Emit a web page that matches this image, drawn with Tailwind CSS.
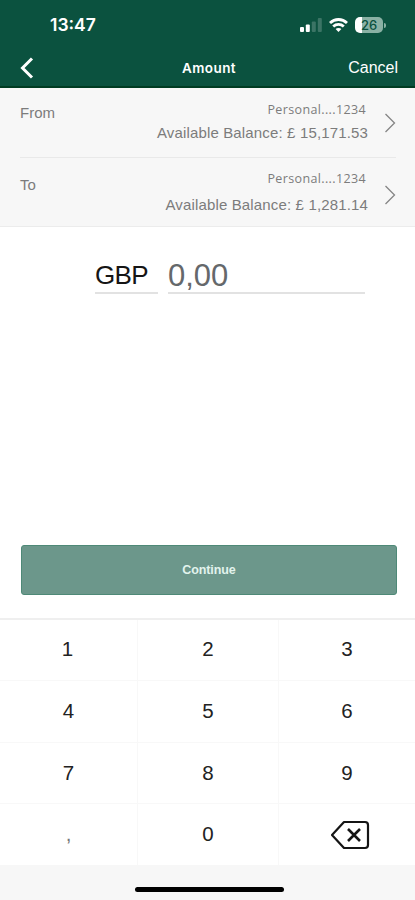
<!DOCTYPE html>
<html lang="en">
<head>
    <meta charset="UTF-8">
    <meta name="viewport" content="width=device-width, initial-scale=1.0">
    <title>Amount</title>
    <script src="https://cdn.jsdelivr.net/npm/@tailwindcss/browser@4"></script>
</head>
<body class="bg-white font-['Liberation_Sans',sans-serif]">
    <div class="w-full h-[900px] flex flex-col overflow-hidden">
        <!-- Header -->
        <header class="h-[88px] shrink-0 bg-[#0b523f] border-b-2 border-[#003c22] text-white">
            <div class="h-[50px] pl-[50px] pr-[29px] flex justify-between items-center">
                <span class="font-['Inter',sans-serif] font-semibold text-[17.5px] leading-[50px]">13:47</span>
                <div class="flex items-center">
                    <svg class="w-[22px] h-[14px] mr-[7px]" viewBox="0 0 22 14" fill="white">
                        <rect x="0" y="9" width="4" height="5" rx="1"/>
                        <rect x="5.8" y="6.5" width="4" height="7.5" rx="1"/>
                        <rect x="11.8" y="3.5" width="4" height="10.5" rx="1" fill-opacity=".2"/>
                        <rect x="17.8" y="0" width="4" height="14" rx="1" fill-opacity=".2"/>
                    </svg>
                    <svg class="w-[19px] h-[14px] mr-[7px]" viewBox="0 0 19 14" fill="none" stroke="white" stroke-width="2.8">
                        <path d="M1 5C5.8 .3 13.2 .3 18 5"/>
                        <path d="M4.2 8.4C7.2 5.6 11.8 5.6 14.8 8.4"/>
                        <path d="M6.6 11L9.5 14L12.4 11C10.8 9.5 8.2 9.5 6.6 11Z" fill="white" stroke="none"/>
                    </svg>
                    <div class="w-[28px] h-[16px] rounded-[5px] bg-linear-to-r from-white from-26% to-[#8ab1a4] to-26% flex items-center justify-center text-[#0b523f] text-[13px] leading-4 font-['Inter',sans-serif] font-medium">26</div>
                    <div class="w-[2px] h-[5px] rounded-r-full bg-[#8ab1a4] ml-px"></div>
                </div>
            </div>
            <div class="h-[36px] pl-[20px] pr-[17px] grid grid-cols-3 items-center">
                <svg class="w-[14px] h-[22px]" viewBox="0 0 14 22" fill="none" stroke="white" stroke-width="3">
                    <path d="M12 1.5L2.5 11L12 20.5"/>
                </svg>
                <h1 class="text-center font-['Inter',sans-serif] font-semibold text-[13.5px] leading-9 tracking-[0.45px]">Amount</h1>
                <button class="text-right text-[16px]">Cancel</button>
            </div>
        </header>

        <!-- Accounts -->
        <section class="h-[139px] shrink-0 bg-[#f7f7f7] border-b border-[#ececec] pl-[20px] pr-[19px] text-[#7c7c7c] text-[15px]">
            <div class="h-[70px] flex border-b border-[#e9e9e9]">
                <span class="pt-[16px] leading-[18px]">From</span>
                <div class="flex-1 pt-[13px] text-right">
                    <p class="pr-[2px] text-[12.5px] leading-[18px] tracking-[0.37px] font-['Open_Sans',sans-serif]">Personal....1234</p>
                    <p class="pt-[5px] leading-[18px] tracking-[0.15px] whitespace-nowrap">Available Balance: £ 15,171.53</p>
                </div>
                <svg class="w-[12px] h-[22px] mt-[24px] ml-[16px]" viewBox="0 0 12 22" fill="none" stroke="#858585" stroke-width="1.3">
                    <path d="M1.5 2L10.5 11L1.5 20"/>
                </svg>
            </div>
            <div class="h-[68px] flex">
                <span class="pt-[18px] leading-[18px]">To</span>
                <div class="flex-1 pt-[12px] text-right">
                    <p class="pr-[2px] text-[12.5px] leading-[18px] tracking-[0.37px] font-['Open_Sans',sans-serif]">Personal....1234</p>
                    <p class="pt-[8px] leading-[18px] tracking-[0.15px] whitespace-nowrap">Available Balance: £ 1,281.14</p>
                </div>
                <svg class="w-[12px] h-[22px] mt-[26px] ml-[16px]" viewBox="0 0 12 22" fill="none" stroke="#858585" stroke-width="1.3">
                    <path d="M1.5 2L10.5 11L1.5 20"/>
                </svg>
            </div>
        </section>

        <!-- Amount input -->
        <main class="flex-1 flex flex-col justify-between pt-[29px] pb-[23px]">
            <div class="flex pl-[95px] gap-[10px]">
                <div class="w-[63px] h-[38px] border-b-2 border-[#e2e2e2] text-[26px] leading-[39px] tracking-[-0.7px] text-[#151515]">GBP</div>
                <div class="w-[197px] h-[38px] border-b-2 border-[#e2e2e2] text-[31px] leading-[39px] text-[#65686b]">0,00</div>
            </div>
            <button class="h-[50px] ml-[21px] mr-[18px] rounded-[3px] bg-[#6c978b] border border-[#4e8977] text-[#e2f3ed] text-[12.5px] font-bold tracking-[-0.1px]">Continue</button>
        </main>

        <!-- Keypad -->
        <div class="h-[247px] shrink-0 border-t-2 border-[#efefef] grid grid-cols-[138px_141px_136px] grid-rows-[61px_62px_61px_61px] text-[20.5px] text-[#222222] *:flex *:items-center *:justify-center *:border-[#f8f8f8]">
            <button class="border-r border-b pr-[2px] pb-[2px]">1</button>
            <button class="border-r border-b pb-[2px]">2</button>
            <button class="border-b pb-[2px]">3</button>
            <button class="border-r border-b">4</button>
            <button class="border-r border-b">5</button>
            <button class="border-b">6</button>
            <button class="border-r border-b">7</button>
            <button class="border-r border-b">8</button>
            <button class="border-b">9</button>
            <button class="border-r text-[#777777]">,</button>
            <button class="border-r">0</button>
            <button aria-label="Delete">
                <svg class="w-[40px] h-[30px] ml-[5px]" viewBox="0 0 40 30" fill="none" stroke="#151515" stroke-width="2.2" stroke-linejoin="round">
                    <path d="M14 2H35Q38 2 38 5V25Q38 28 35 28H14L2 15Z"/>
                    <path d="M18 9L30 21M30 9L18 21" stroke-width="2.6"/>
                </svg>
            </button>
        </div>

        <!-- Home indicator -->
        <div class="h-[35px] shrink-0 bg-[#f7f7f7] flex justify-center pt-[22px]">
            <div class="w-[149px] h-[5px] rounded-full bg-black ml-[3px]"></div>
        </div>
    </div>
</body>
</html>
